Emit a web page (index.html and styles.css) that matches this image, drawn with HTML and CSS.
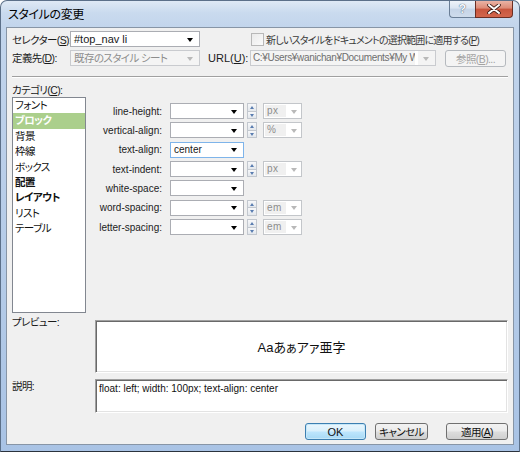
FILE: index.html
```html
<!DOCTYPE html>
<html lang="ja">
<head>
<meta charset="utf-8">
<title>スタイルの変更</title>
<link rel="stylesheet" href="styles.css">
</head>
<body>
<div class="window">
  <div class="titlebar">
    <span class="title">スタイルの変更</span>
    <div class="caps">
      <div class="cap help">?</div>
      <div class="cap close">
        <svg width="14" height="10" viewBox="0 0 14 10"><path d="M2 1 L12 9 M12 1 L2 9" stroke="#3a1a14" stroke-width="3.6" stroke-linecap="round"/><path d="M2 1 L12 9 M12 1 L2 9" stroke="#fff" stroke-width="2" stroke-linecap="round"/></svg>
      </div>
    </div>
  </div>
  <div class="client">
    <div class="row r1">
      <span class="lab jp">セレクター(<u>S</u>):</span>
      <div class="combo sel"><span class="val">#top_nav li</span><i class="arr"></i></div>
      <span class="chk"></span>
      <span class="chklab">新しいスタイルをドキュメントの選択範囲に適用する(<u>P</u>)</span>
    </div>
    <div class="row r2">
      <span class="lab jp">定義先(<u>D</u>):</span>
      <div class="combo sel dis"><span class="val jp">既存のスタイル シート</span><i class="arr"></i></div>
      <span class="urllab">URL(<u>U</u>):</span>
      <div class="combo url dis"><span class="val">C:¥Users¥wanichan¥Documents¥My Wi</span><span class="fade"></span><i class="arr"></i></div>
      <div class="btn disbtn jp">参照(<u>B</u>)...</div>
    </div>
    <div class="sep"></div>
    <div class="catlab jp">カテゴリ(<u>C</u>):</div>
    <div class="middle">
      <ul class="cats jp">
        <li>フォント</li>
        <li class="on">ブロック</li>
        <li>背景</li>
        <li>枠線</li>
        <li>ボックス</li>
        <li class="b">配置</li>
        <li class="b">レイアウト</li>
        <li>リスト</li>
        <li>テーブル</li>
      </ul>
      <div class="props">
        <span class="plab">line-height:</span>
        <div class="combo pc"><span class="val"></span><i class="arr"></i></div>
        <div class="spin"><i class="up"></i><i class="dn"></i></div>
        <div class="combo unit dis"><span class="val">px</span><i class="arr"></i></div>

        <span class="plab">vertical-align:</span>
        <div class="combo pc"><span class="val"></span><i class="arr"></i></div>
        <div class="spin"><i class="up"></i><i class="dn"></i></div>
        <div class="combo unit dis"><span class="val">%</span><i class="arr"></i></div>

        <span class="plab">text-align:</span>
        <div class="combo pc focus"><span class="val">center</span><i class="arr"></i></div>
        <span></span><span></span>

        <span class="plab">text-indent:</span>
        <div class="combo pc"><span class="val"></span><i class="arr"></i></div>
        <div class="spin"><i class="up"></i><i class="dn"></i></div>
        <div class="combo unit dis"><span class="val">px</span><i class="arr"></i></div>

        <span class="plab">white-space:</span>
        <div class="combo pc"><span class="val"></span><i class="arr"></i></div>
        <span></span><span></span>

        <span class="plab">word-spacing:</span>
        <div class="combo pc"><span class="val"></span><i class="arr"></i></div>
        <div class="spin"><i class="up"></i><i class="dn"></i></div>
        <div class="combo unit dis"><span class="val">em</span><i class="arr"></i></div>

        <span class="plab">letter-spacing:</span>
        <div class="combo pc"><span class="val"></span><i class="arr"></i></div>
        <div class="spin"><i class="up"></i><i class="dn"></i></div>
        <div class="combo unit dis"><span class="val">em</span><i class="arr"></i></div>
      </div>
    </div>
    <div class="row prev">
      <span class="blab jp">プレビュー:</span>
      <div class="pbox">Aaあぁアァ亜字</div>
    </div>
    <div class="row desc">
      <span class="blab jp">説明:</span>
      <div class="dbox">float: left; width: 100px; text-align: center</div>
    </div>
    <div class="row btns">
      <div class="btn ok">OK</div>
      <div class="btn cancel jp">キャンセル</div>
      <div class="btn apply jp">適用(<u>A</u>)</div>
    </div>
  </div>
</div>
</body>
</html>
```

FILE: styles.css
```css
html, body {
  margin: 0;
  padding: 0;
  background: #ffffff;
}
body {
  font-family: "Liberation Sans", "Noto Sans CJK JP", sans-serif;
  font-size: 11px;
  color: #1a1a1a;
  font-feature-settings: "palt";
}
u { text-decoration: underline; }
.jp {
  font-size: 10.5px;
  letter-spacing: -0.6px;
}

.window {
  width: 520px;
  height: 452px;
  box-sizing: border-box;
  border: 1px solid #5c7089;
  border-bottom-color: #2b333d;
  border-radius: 7px 7px 0 0;
  padding: 0 5px 6px 5px;
  display: flex;
  flex-direction: column;
  background: linear-gradient(180deg, #dfe9f5 0px, #c9daee 12px, #c2d5ec 26px, #bcd0ea 120px, #b3cae7 300px, #a9c3e5 452px);
}
.titlebar {
  height: 26px;
  display: flex;
  align-items: flex-start;
}
.title {
  font-size: 12px;
  padding: 4px 0 0 2px;
  color: #000;
  letter-spacing: -0.4px;
}
.caps {
  margin-left: auto;
  margin-right: 1px;
  display: flex;
  height: 18px;
}
.cap {
  height: 17px;
  box-sizing: border-box;
  border: 1px solid #6a7e96;
  border-top: none;
  display: flex;
  align-items: center;
  justify-content: center;
}
.help {
  width: 26px;
  border-radius: 0 0 0 4px;
  border-right: none;
  background: linear-gradient(180deg, #eef3f9 0%, #d9e4f1 45%, #c5d4e7 50%, #cfdcec 100%);
  color: #f6f8fb;
  font-weight: bold;
  font-size: 12px;
  text-shadow: 0 0 1px #56687e, 0 0 1px #56687e;
}
.close {
  width: 38px;
  border-radius: 0 0 4px 0;
  border-color: #6b2e23;
  background: linear-gradient(180deg, #eab3a5 0%, #dd8a75 45%, #c8553d 50%, #d2664c 100%);
}

.client {
  flex: 1;
  background: #f0f0f0;
  border: 1px solid #8795a6;
  padding: 2px 5px 0 5px;
  display: flex;
  flex-direction: column;
}

.row {
  display: flex;
  align-items: center;
}
.r1 { height: 16px; margin-top: 1px; }
.r2 { height: 17px; margin-top: 3px; align-items: flex-start; }
.lab { width: 58px; flex: none; white-space: nowrap; }
.r2 .lab { line-height: 16px; }

.combo {
  height: 16px;
  box-sizing: border-box;
  border: 1px solid #abadb3;
  background: #fff;
  display: flex;
  align-items: center;
  overflow: hidden;
  white-space: nowrap;
  flex: none;
}
.combo .val {
  flex: 1;
  padding-left: 3px;
  overflow: hidden;
  line-height: 14px;
  height: 14px;
}
.combo .arr {
  flex: none;
  width: 0;
  height: 0;
  border-left: 3.5px solid transparent;
  border-right: 3.5px solid transparent;
  border-top: 4px solid #000;
  margin: 1px 6px 0 6px;
}
.combo.dis {
  border-color: #c9cbcf;
  background: #f4f4f4;
  color: #8d8d8d;
}
.combo.dis .arr { border-top-color: #b9b9b9; }

.sel { width: 130px; }
.chk {
  width: 13px;
  height: 13px;
  flex: none;
  box-sizing: border-box;
  border: 1px solid #b8b8b8;
  background: linear-gradient(135deg, #eaeaea, #fbfbfb);
  margin-left: 51px;
  margin-right: 2px;
}
.chklab {
  color: #3a3a3a;
  white-space: nowrap;
  font-size: 10px;
  letter-spacing: -0.8px;
}

.urllab { margin-left: 8px; width: 42px; flex: none; line-height: 16px; white-space: nowrap; }
.url { width: 186px; }
.url .val {
  color: #6f6f6f;
  font-size: 10px;
  letter-spacing: -0.35px;
  padding-left: 2px;
}
.url .fade { width: 3px; height: 14px; background: #fff; flex: none; }
.url .arr { margin-left: 5px; }

.btn {
  height: 17px;
  box-sizing: border-box;
  border: 1px solid #707070;
  border-radius: 3px;
  background: linear-gradient(180deg, #f2f2f2 0%, #ebebeb 48%, #dddddd 52%, #cfcfcf 100%);
  display: flex;
  align-items: center;
  justify-content: center;
  white-space: nowrap;
  color: #111;
  flex: none;
}
.disbtn {
  width: 61px;
  margin-left: 9px;
  border-color: #b5b9be;
  background: #f4f4f4;
  color: #a3a3a3;
}

.sep {
  margin-top: 9px;
  height: 0;
  border-top: 1px solid #a0a0a0;
  border-bottom: 1px solid #ffffff;
}
.catlab {
  margin-top: 6px;
  height: 13px;
  line-height: 13px;
}

.middle {
  height: 216px;
  display: flex;
  align-items: flex-start;
}
.cats {
  list-style: none;
  margin: 0;
  padding: 0;
  width: 74px;
  height: 216px;
  box-sizing: border-box;
  border: 1px solid #828790;
  background: #fff;
  flex: none;
}
.cats li {
  height: 15.4px;
  line-height: 15.4px;
  padding-left: 2px;
  white-space: nowrap;
  color: #111;
}
.cats li.on {
  background: #abcf8c;
  color: #fff;
  font-weight: bold;
}
.cats li.b { font-weight: bold; }

.props {
  margin-top: 6px;
  display: grid;
  grid-template-columns: 76px 82px 13px 45px;
  grid-auto-rows: 16px;
  row-gap: 3.35px;
  align-items: center;
}
.plab {
  font-size: 10px;
  text-align: right;
  white-space: nowrap;
  color: #222;
}
.pc { margin-left: 8px; width: 74px; }
.pc.focus { border-color: #7eb4ea; }
.pc .val { font-size: 10px; }

.spin {
  width: 10px;
  height: 16px;
  display: flex;
  flex-direction: column;
  margin-left: 3px;
}
.spin i {
  flex: 1;
  box-sizing: border-box;
  border: 1px solid #c2c7ce;
  background: linear-gradient(180deg, #f7f8fa, #e3e7ec);
  position: relative;
}
.spin i.up { border-bottom: none; }
.spin i::after {
  content: "";
  position: absolute;
  left: 2px;
  top: 2px;
  width: 0;
  height: 0;
  border-left: 2.5px solid transparent;
  border-right: 2.5px solid transparent;
}
.spin i.up::after { border-bottom: 3px solid #5a7db0; }
.spin i.dn::after { border-top: 3px solid #5a7db0; }

.unit {
  width: 39px;
  margin-left: 6px;
}
.props .combo.unit {
  background: #fff;
  border-color: #c3c6ca;
}
.unit .val {
  font-size: 10px;
  background: #f0f0f0;
  margin: 1px 0 1px 1px;
  padding-left: 2px;
  height: 12px;
  line-height: 12px;
  letter-spacing: 0.5px;
}
.unit .arr { margin: 1px 4px 0 5px; }

.blab {
  width: 83px;
  flex: none;
  white-space: nowrap;
  align-self: flex-start;
  line-height: 13px;
}
.prev { margin-top: 7px; height: 53px; align-items: flex-start; }
.prev .blab { margin-top: -4px; }
.pbox, .dbox {
  flex: 1;
  align-self: stretch;
  box-sizing: border-box;
  background: #fff;
  border-top: 1px solid #a0a0a0;
  border-left: 1px solid #a0a0a0;
  border-right: 1px solid #ffffff;
  border-bottom: 1px solid #ffffff;
  box-shadow: inset 1px 1px 0 #696969, inset -1px -1px 0 #e3e3e3;
}
.pbox {
  display: flex;
  align-items: center;
  justify-content: center;
  font-size: 13px;
  color: #111;
}
.desc { margin-top: 6px; height: 34px; align-items: flex-start; }
.desc .blab { margin-top: 1px; }
.dbox {
  font-size: 10px;
  padding: 3px 0 0 3px;
  color: #111;
}

.btns {
  margin-top: 10px;
  height: 17px;
  justify-content: flex-end;
}
.ok {
  width: 61px;
  border-color: #3c7fb1;
  background: linear-gradient(180deg, #eaf6fd 0%, #d9f0fc 48%, #bee6fd 52%, #a7d9f5 100%);
  box-shadow: inset 0 0 0 1px #c6e7f8;
}
.cancel { width: 53px; margin-left: 9px; }
.apply { width: 62px; margin-left: 18px; }
```
